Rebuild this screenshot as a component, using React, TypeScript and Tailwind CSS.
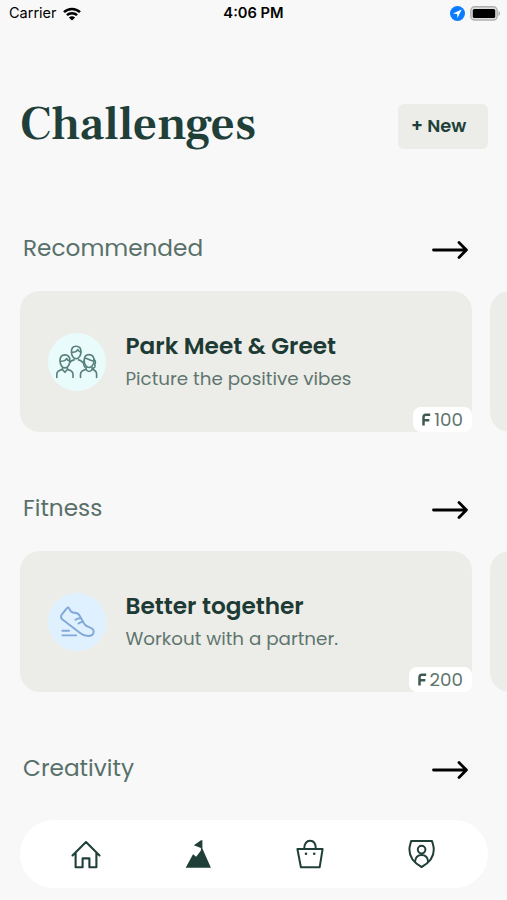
import type { ReactNode } from 'react';

interface Challenge {
  title: string;
  description: string;
  points: number;
  iconBg: string;
  icon: ReactNode;
}

function PeopleIcon() {
  return (
    <svg className="w-[58px] h-[58px]" viewBox="0 0 58 58" fill="none" stroke="#568079" strokeWidth={1.6} strokeLinecap="round" strokeLinejoin="round">
      <path d="M23.4 18.8c0-3.6 1.9-5.6 4.7-5.6s4.9 2 4.9 5.6c0 3.6-2.2 7-4.9 7s-4.7-3.4-4.7-7z" />
      <path d="M24 19.2c3.2.2 5-1 5.8-2.7.8 1.6 1.8 2.4 3 2.6" />
      <path d="M21.8 29.5c1-1.6 2.5-2.3 4.3-2.6M34.6 29.5c-.9-1.5-2.3-2.3-4-2.6" />
      <path d="M12 27.7c0-3.8 1.9-5.8 4.9-5.8s5 2 5 5.8c0 3.7-2.2 7.2-5 7.2s-4.9-3.5-4.9-7.2z" />
      <path d="M12.6 28.3c3.4 0 5.3-1.2 6-2.8.8 1.5 1.8 2.3 3 2.5" />
      <path d="M8.8 44.5v-3.3c0-2.7 2.3-4 5.6-4.8v-1.6M19.4 34.8v1.6c3.3.8 5.6 2.1 5.6 4.8v3.3M14.4 36.4l2.5 2.9 2.5-2.9" />
      <path d="M36.2 27.4c0-3.8 1.9-5.8 4.8-5.8s5 2 5 5.8c0 3.7-2.2 7.1-5 7.1s-4.8-3.4-4.8-7.1z" />
      <path d="M36.5 25.2c3.8 0 5 2.7 9 2.8M46 26c1.8 2.1 1.6 4.2.7 5.7.8 1.6.2 3.3-2 3.7M36.2 27.4c-1 2.7-.7 5 .8 6.9" />
      <path d="M32.5 44.5v-3.3c0-2.7 2.2-4 5.6-4.8 1.7 2.8 4.2 2.8 6 0 3.4.8 4.5 2.1 4.5 4.8v3.3M38.1 36.4v-2M44.1 36.4v-2" />
    </svg>
  );
}

function ShoeIcon() {
  return (
    <svg className="w-[58px] h-[58px]" viewBox="0 0 58 58" fill="none" stroke="#82a8d9" strokeWidth={1.9} strokeLinecap="round" strokeLinejoin="round">
      <path d="M19.2 14.9c.8-.8 1.400-.5 1.800.3 1 2.600 2.600 4.600 5.600 4.600 3 0 4.200.8 5.200 3.200l4.800 8.400c1 1.500 2.700 2.200 4.900 2.900 3.300 1 4.600 2.800 4.100 5.200-.5 2.600-2.700 3.500-5.500 3.500-3.500 0-5.200-.6-7.700-2.700L14.500 26.500c-1.600-1.500-2-2.900-1-4.600z" />
      <path d="M27.500 26.800c1.300-1 3-1.500 5-1.500M30.500 30.500c1.200-1.100 2.700-1.600 4.700-1.800" />
      <path d="M14.400 37.800h6.700M14.400 42.400h13.800" />
    </svg>
  );
}

function ArrowRight() {
  return (
    <svg className="w-[38px] h-5" viewBox="0 0 38 20" fill="none" stroke="#000" strokeWidth={2.8} strokeLinecap="round" strokeLinejoin="round">
      <path d="M2.5 10h33M28 2.6L35.4 10l-7.4 7.4" />
    </svg>
  );
}

function PointsIcon() {
  return (
    <svg className="w-[9px] h-[13px]" viewBox="0 0 9 13" fill="none" stroke="#3f5a53" strokeWidth={2.5}>
      <path d="M1.5 12.500V4.300Q1.500 1.700 4 1.700H8.200M1.500 7.300H7.300" />
    </svg>
  );
}

function StatusBar() {
  return (
    <div className="grid grid-cols-3 items-center h-[27px] pl-[9px] pr-[6px] text-black font-['Inter',sans-serif]">
      <div className="flex items-center gap-[6px]">
        <span className="text-[14.5px] leading-none">Carrier</span>
        <svg className="w-[18px] h-[14px]" viewBox="0 0 18 14" fill="none" stroke="#000" strokeWidth={2.5}>
          <path d="M1 5.200a11.600 11.600 0 0 1 16 0M3.900 8.200a7.400 7.400 0 0 1 10.200 0" />
          <path d="M9 13.600L5.900 10.500a4.400 4.400 0 0 1 6.200 0z" fill="#000" stroke="none" />
        </svg>
      </div>
      <span className="pr-[3px] text-center text-[14.7px] leading-none font-semibold">4:06 PM</span>
      <div className="flex items-center justify-end gap-[5px]">
        <svg className="w-[15px] h-[15px]" viewBox="0 0 15 15">
          <circle cx="7.5" cy="7.5" r="7.5" fill="#0a7cff" />
          <path d="M11.700 3.400L2.900 7.500l4.200.4.400 4.100z" fill="#fff" />
        </svg>
        <svg className="w-[31px] h-[15px]" viewBox="0 0 31 15">
          <rect x="0.8" y="0.8" width="26.4" height="13.2" rx="3.8" fill="#dedede" stroke="#b0b0b0" strokeWidth={1.4} />
          <rect x="2.8" y="3" width="22.4" height="9" rx="1.6" fill="#000" />
          <path d="M28.5 5v5c2-.7 2-4.300 0-5z" fill="#aaa" />
        </svg>
      </div>
    </div>
  );
}

function SectionHeader({ title }: { title: string }) {
  return (
    <div className="flex items-center justify-between h-10 pl-[23px] pr-[38px]">
      <h2 className="text-[23.2px] leading-10 text-[#58706a]">{title}</h2>
      <button className="pt-[3px]" aria-label={`See all ${title}`}>
        <ArrowRight />
      </button>
    </div>
  );
}

function ChallengeCard({ challenge }: { challenge: Challenge }) {
  return (
    <div className="flex gap-[18px] pl-5 overflow-hidden">
      <div className="relative flex shrink-0 items-center w-[452px] h-[141px] pl-7 rounded-[20px] bg-[#ecede8]">
        <div className={`w-[58px] h-[58px] rounded-full ${challenge.iconBg}`}>{challenge.icon}</div>
        <div className="pl-[19.5px] pb-px whitespace-nowrap">
          <h3 className="text-[23.2px] leading-8 font-semibold text-[#1d3a34]">{challenge.title}</h3>
          <p className="mt-[3px] text-[18.3px] leading-7 text-[#60756f]">{challenge.description}</p>
        </div>
        <div className="absolute right-0 bottom-0 flex items-center gap-[3px] h-[25px] px-[9px] rounded-lg bg-white">
          <PointsIcon />
          <span className="pt-px text-[18.3px] leading-none text-[#60756f]">{challenge.points}</span>
        </div>
      </div>
      <div className="shrink-0 w-[452px] h-[141px] rounded-[20px] bg-[#ecede8]" />
    </div>
  );
}

function TabBar() {
  return (
    <nav className="flex items-center justify-between h-[68px] ml-5 mr-[19px] px-[51px] rounded-full bg-white text-[#213f39]">
      <svg className="w-[30px] h-[30px]" viewBox="0 0 30 30" fill="none" stroke="currentColor" strokeWidth={2.1} strokeLinejoin="round" strokeLinecap="round">
        <path d="M1.500 16.500L15 3l13.500 13.500M4.600 14v14.200h7V19.400h6.800v8.800h7V14" />
      </svg>
      <svg className="w-[30px] h-[30px]" viewBox="0 0 30 30" fill="currentColor">
        <path d="M2.700 28.800L10 15.200l3.200 2.600 4.700-6.300V9L10.800 6.200 18 1.200h1.400V9.500L27.900 28.800z" />
      </svg>
      <svg className="w-[30px] h-[30px]" viewBox="0 0 30 30" fill="none" stroke="currentColor" strokeWidth={2} strokeLinejoin="round">
        <path d="M2.400 10h25.200l-2.900 18.200H5.900z" />
        <path d="M9.200 10c0-5.400 2.400-8.200 5.800-8.200s5.800 2.800 5.800 8.200" />
        <circle cx="11" cy="14.700" r="1.3" fill="currentColor" stroke="none" />
        <circle cx="19.2" cy="14.700" r="1.3" fill="currentColor" stroke="none" />
      </svg>
      <svg className="w-[30px] h-[30px]" viewBox="0 0 30 30" fill="none" stroke="currentColor" strokeWidth={2} strokeLinejoin="round">
        <path d="M4.200 2h20.800c.7 3 1.800 5 1.800 8.600 0 8-5 13.600-12.200 17.400C7.400 24.200 2.400 18.600 2.400 10.600 2.400 7 3.500 5 4.200 2z" />
        <circle cx="14.6" cy="10.600" r="3.8" />
        <path d="M8 23c.4-4.300 3-6.900 6.600-6.900s6.200 2.600 6.600 6.900" />
      </svg>
    </nav>
  );
}

const park: Challenge = {
  title: 'Park Meet & Greet',
  description: 'Picture the positive vibes',
  points: 100,
  iconBg: 'bg-[#eafbfb]',
  icon: <PeopleIcon />,
};

const together: Challenge = {
  title: 'Better together',
  description: 'Workout with a partner.',
  points: 200,
  iconBg: 'bg-[#dff1ff]',
  icon: <ShoeIcon />,
};

export default function App() {
  return (
    <div className="flex flex-col w-[507px] h-[900px] overflow-hidden bg-[#f8f8f8] font-['Poppins','Inter',sans-serif]">
      <StatusBar />
      <header className="flex items-center justify-between mt-[77px] h-[45px] pl-[20px] pr-[19px]">
        <h1 className="pb-1 font-['Frank_Ruhl_Libre','Liberation_Serif',serif] font-semibold text-[47.5px] leading-[41px] text-[#213f39]">Challenges</h1>
        <button className="w-[90px] h-[45px] pl-[13px] rounded-md bg-[#ecede8] text-left text-[17.8px] font-semibold text-[#213f39]">+ New</button>
      </header>
      <main className="flex flex-col pt-[79px]">
        <SectionHeader title="Recommended" />
        <div className="pt-[23px] pb-14">
          <ChallengeCard challenge={park} />
        </div>
        <SectionHeader title="Fitness" />
        <div className="pt-[23px] pb-14">
          <ChallengeCard challenge={together} />
        </div>
        <SectionHeader title="Creativity" />
      </main>
      <div className="pt-8">
        <TabBar />
      </div>
    </div>
  );
}
